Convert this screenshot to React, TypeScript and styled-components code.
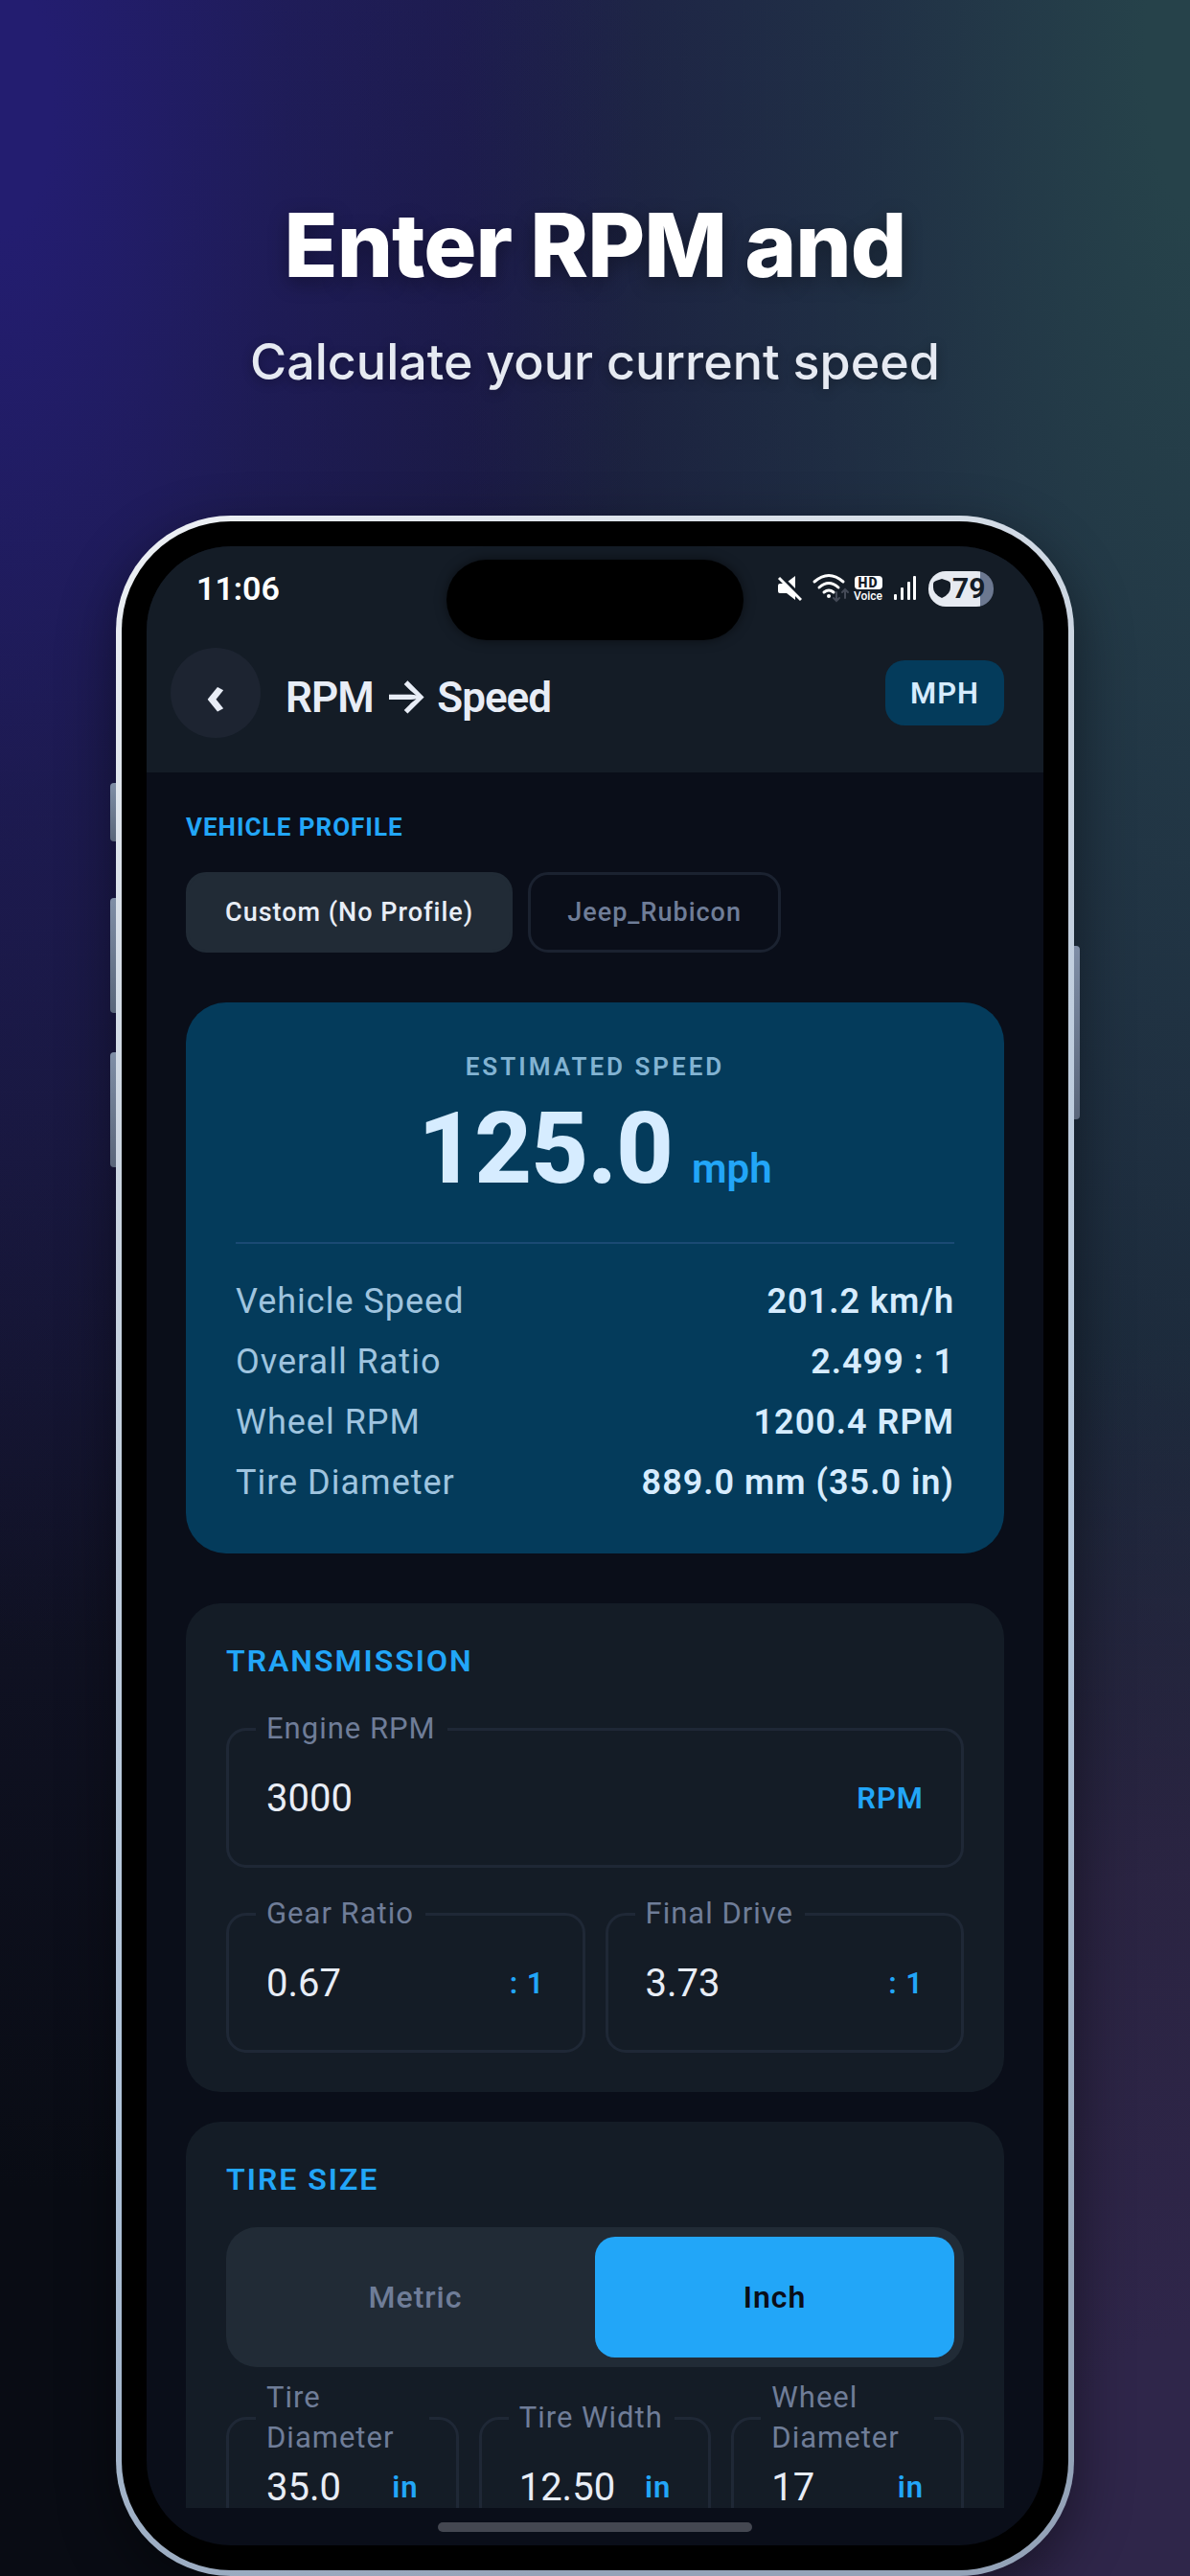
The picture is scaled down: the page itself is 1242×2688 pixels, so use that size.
import React, { useState } from 'react';
import styled, { createGlobalStyle } from 'styled-components';

const color = {
  screen: '#0a0e19',
  panel: '#141c26',
  raised: '#212b36',
  line: '#1f2836',
  hero: '#043b5b',
  heroText: '#d6ecff',
  accent: '#22a6f8',
  muted: '#6f7d98',
  text: '#e8edf6',
};

const GlobalStyle = createGlobalStyle`
  * { box-sizing: border-box; }
  html, body { margin: 0; min-height: 100%; background: #080b13; }
  body { font-family: Roboto, Inter, "Noto Sans", sans-serif; color: ${color.text}; }
  button, input { font: inherit; color: inherit; letter-spacing: inherit; border: 0; margin: 0; padding: 0; background: none; }
  h1, h2, p, dl, dd, dt { margin: 0; }
`;

const Page = styled.main`
  display: flex;
  flex-direction: column;
  align-items: center;
  min-height: 100vh;
  padding: 200px 120px 0;
  background:
    radial-gradient(ellipse 54% 60% at 0% 4%, #231d70 8%, rgba(35, 29, 112, 0.45) 45%, rgba(35, 29, 112, 0) 100%),
    radial-gradient(ellipse 70% 46% at 100% 98%, #2f264a 16%, rgba(46, 37, 70, 0.85) 55%, rgba(46, 37, 70, 0) 100%),
    radial-gradient(ellipse 62% 100% at 100% 2%, #26424a 6%, rgba(34, 56, 70, 0.75) 42%, rgba(36, 46, 62, 0) 100%),
    linear-gradient(180deg, #1c1c46 0%, #15162f 45%, #090c14 85%);
  overflow: hidden;
`;

const Intro = styled.header`
  display: flex;
  flex-direction: column;
  align-items: center;
  gap: 28px;
  height: 338px;
  font-family: Inter, sans-serif;
  text-align: center;
`;

const Headline = styled.h1`
  font-size: 92px;
  line-height: 112px;
  font-weight: 800;
  letter-spacing: -1px;
  color: #fff;
  text-shadow: 0 6px 20px rgba(0, 0, 0, 0.35);
`;

const Tagline = styled.p`
  font-size: 52px;
  line-height: 76px;
  font-weight: 500;
  color: #e6eaf2;
  text-shadow: 0 3px 12px rgba(0, 0, 0, 0.3);
`;

const Phone = styled.section`
  position: relative;
  width: 100%;
  max-width: 1000px;
  padding: 6px;
  border-radius: 120px;
  background: linear-gradient(150deg, #eef1f5 0%, #cbd5e1 25%, #b0c4da 62%, #94a3b8 88%);
  box-shadow: 0 20px 60px rgba(0, 0, 0, 0.45);
`;

const SideKey = styled.span<{ $side: 'left' | 'right'; $top: number; $length: number }>`
  position: absolute;
  top: ${(p) => p.$top}px;
  ${(p) => p.$side}: -6px;
  width: 6px;
  height: ${(p) => p.$length}px;
  border-radius: ${(p) => (p.$side === 'left' ? '4px 0 0 4px' : '0 4px 4px 0')};
  background: linear-gradient(180deg, #7f8ea6, #596579);
`;

const Bezel = styled.div`
  padding: 26px;
  border-radius: 114px;
  background: #000;
`;

const Screen = styled.div`
  position: relative;
  display: flex;
  flex-direction: column;
  border-radius: 88px;
  overflow: hidden;
  background: ${color.screen};
`;

const Island = styled.div`
  position: absolute;
  top: 14px;
  left: 50%;
  width: 310px;
  height: 84px;
  margin-left: -155px;
  border-radius: 42px;
  background: #000;
  box-shadow: 0 0 12px rgba(0, 0, 0, 0.5);
`;

const TopBar = styled.div`
  height: 236px;
  background: ${color.panel};
`;

const StatusBar = styled.div`
  display: flex;
  justify-content: space-between;
  align-items: center;
  height: 88px;
  padding: 0 52px;
`;

const Clock = styled.time`
  font-size: 34px;
  line-height: 40px;
  font-weight: 600;
  color: #fff;
`;

const StatusIcons = styled.div`
  display: flex;
  align-items: center;
  gap: 12px;
`;

const HdMark = styled.div`
  display: flex;
  flex-direction: column;
  align-items: center;
  gap: 2px;
  width: 30px;
  font-size: 12px;
  line-height: 11px;
  font-weight: 500;
  color: #fff;
  b {
    width: 29px;
    height: 14px;
    border-radius: 4px;
    background: #fff;
    color: ${color.panel};
    font-size: 14px;
    line-height: 14px;
    font-weight: 900;
    letter-spacing: 1px;
    text-align: center;
  }
`;

const Battery = styled.div`
  display: flex;
  align-items: center;
  width: 68px;
  height: 37px;
  padding-left: 5px;
  border-radius: 18px;
  background: linear-gradient(90deg, #e6eaf1 79%, #6c7890 79%);
  color: ${color.panel};
  font-size: 30px;
  line-height: 36px;
  font-weight: 700;
  svg { margin-right: 2px; }
`;

const NavBar = styled.div`
  display: flex;
  align-items: center;
  height: 130px;
  padding: 0 41px 0 25px;
`;

const BackButton = styled.button`
  width: 94px;
  height: 94px;
  border-radius: 50%;
  background: #1d2431;
  font-family: "Noto Sans", sans-serif;
  font-size: 56px;
  line-height: 92px;
  font-weight: 700;
`;

const Title = styled.h2`
  flex: 1;
  padding: 8px 0 0 26px;
  font-size: 44px;
  line-height: 52px;
  font-weight: 600;
  letter-spacing: -1px;
  white-space: nowrap;
  span {
    font-family: Inter, sans-serif;
    font-size: 50px;
    line-height: 50px;
  }
`;

const UnitButton = styled.button`
  height: 68px;
  padding: 0 26px;
  border-radius: 20px;
  background: ${color.hero};
  color: ${color.heroText};
  font-size: 31px;
  font-weight: 600;
  letter-spacing: 1px;
`;

const Scroller = styled.div`
  display: flex;
  flex-direction: column;
  height: 1811px;
  padding: 41px 41px 0;
  overflow: hidden;
`;

const SectionLabel = styled.h2`
  font-size: 26px;
  line-height: 32px;
  font-weight: 700;
  letter-spacing: 1px;
  color: ${color.accent};
`;

const Chips = styled.div`
  display: flex;
  gap: 16px;
  padding: 31px 0 52px;
`;

const Chip = styled.button<{ $active?: boolean }>`
  height: 84px;
  padding: 0 38px;
  border: 3px solid ${(p) => (p.$active ? color.raised : '#1b2230')};
  border-radius: 21px;
  background: ${(p) => (p.$active ? color.raised : 'transparent')};
  color: ${(p) => (p.$active ? color.text : color.muted)};
  font-size: 27px;
  font-weight: 500;
  letter-spacing: 1px;
`;

const Hero = styled.section`
  display: flex;
  flex: none;
  flex-direction: column;
  margin-bottom: 52px;
  padding: 51px 52px 42px;
  border-radius: 42px;
  background: ${color.hero};
`;

const HeroLabel = styled.h2`
  font-size: 26px;
  line-height: 32px;
  font-weight: 600;
  letter-spacing: 3px;
  text-align: center;
  color: #82b3d2;
`;

const Reading = styled.p`
  display: flex;
  justify-content: center;
  align-items: baseline;
  gap: 20px;
  height: 169px;
  border-bottom: 2px solid #1a4a74;
  color: ${color.heroText};
  font-size: 104px;
  line-height: 140px;
  font-weight: 800;
  letter-spacing: -1px;
  span {
    font-size: 42px;
    line-height: 50px;
    font-weight: 600;
    letter-spacing: 0;
    color: ${color.accent};
  }
`;

const Stats = styled.dl`
  display: grid;
  grid-auto-rows: 63px;
  padding-top: 29px;
`;

const Stat = styled.div`
  display: flex;
  justify-content: space-between;
  align-items: center;
  font-size: 36px;
  line-height: 63px;
  letter-spacing: 1px;
  dt { color: #9fc4df; }
  dd { color: ${color.heroText}; font-weight: 600; }
`;

const Card = styled.section`
  flex: none;
  margin-bottom: 31px;
  padding: 41px 42px;
  border-radius: 36px;
  background: ${color.panel};
`;

const CardTitle = styled.h2`
  margin-bottom: 51px;
  font-size: 32px;
  line-height: 38px;
  font-weight: 600;
  letter-spacing: 2px;
  color: ${color.accent};
`;

const FieldRow = styled.div`
  display: grid;
  grid-auto-flow: column;
  grid-auto-columns: minmax(0, 1fr);
  gap: 21px;
  & + & { margin-top: 47px; }
`;

const FieldBox = styled.div`
  position: relative;
  display: flex;
  align-items: center;
  height: 146px;
  padding: 0 39px;
  border: 3px solid ${color.line};
  border-radius: 21px;
`;

const FieldLabel = styled.label`
  position: absolute;
  top: -2px;
  left: 28px;
  max-width: calc(100% - 56px);
  padding: 0 12px 0 11px;
  transform: translateY(-50%);
  background: ${color.panel};
  color: ${color.muted};
  font-size: 31px;
  line-height: 42px;
  letter-spacing: 1px;
`;

const FieldInput = styled.input`
  flex: 1;
  min-width: 0;
  width: 0;
  height: 60px;
  outline: 0;
  color: ${color.text};
  font-size: 40px;
`;

const Suffix = styled.span`
  color: ${color.accent};
  font-size: 31px;
  font-weight: 600;
  letter-spacing: 1px;
`;

const Toggle = styled.div`
  display: grid;
  grid-template-columns: 1fr 1fr;
  height: 146px;
  margin: -20px 0 52px;
  padding: 10px;
  border-radius: 32px;
  background: ${color.raised};
`;

const ToggleOption = styled.button<{ $active: boolean }>`
  border-radius: 21px;
  background: ${(p) => (p.$active ? color.accent : 'transparent')};
  color: ${(p) => (p.$active ? color.screen : color.muted)};
  font-size: 32px;
  font-weight: ${(p) => (p.$active ? 600 : 500)};
  letter-spacing: 1px;
`;

const HomeArea = styled.div`
  display: flex;
  justify-content: center;
  height: 39px;
  padding-top: 15px;
`;

const HomeBar = styled.div`
  width: 328px;
  height: 10px;
  border-radius: 5px;
  background: #444751;
`;

const MuteIcon = () => (
  <svg width="26" height="28" viewBox="0 0 26 28" aria-hidden="true">
    <path d="M11 7 L19 1 V15Z" fill="#fff" />
    <path d="M2 2 L26 26" stroke={color.panel} strokeWidth="7" />
    <path d="M3 9 H8 L19 20 V26 L10 19 H3 Q1 19 1 17 V11 Q1 9 3 9Z" fill="#fff" />
    <path d="M2 3 L25 26" stroke="#fff" strokeWidth="3" />
  </svg>
);

const WifiIcon = () => (
  <svg width="30" height="32" viewBox="0 0 30 32" fill="none" strokeLinecap="round" overflow="visible" aria-hidden="true">
    <path d="M1 9 Q16 -4 31 9" stroke="#fff" strokeWidth="3" />
    <path d="M6 15 Q16 6 26 15" stroke="#fff" strokeWidth="3" />
    <path d="M11 20 Q16 16 21 20" stroke="#fff" strokeWidth="3" />
    <circle cx="16" cy="24" r="2" fill="#fff" />
    <path d="M24 20 V29 M21 26 L24 29 L27 26 M33 26 V17 M30 20 L33 17 L36 20" stroke="#444a57" strokeWidth="2" />
  </svg>
);

const SignalIcon = () => (
  <svg width="24" height="28" viewBox="0 0 24 28" fill="#fff" aria-hidden="true">
    <rect x="0" y="20" width="3" height="6" rx="1" />
    <rect x="7" y="13" width="3" height="13" rx="1" />
    <rect x="14" y="7" width="3" height="19" rx="1" />
    <rect x="20" y="1" width="3" height="25" rx="1" />
  </svg>
);

const ShieldIcon = () => (
  <svg width="18" height="20" viewBox="0 0 18 20" fill={color.panel} aria-hidden="true">
    <path d="M9 0 L15 2 Q18 3 18 5 V9 Q18 16 9 20 Q0 16 0 9 V5 Q0 3 3 2Z" />
  </svg>
);

interface FieldProps { id: string; label: string; initial: string; unit: string }

const Field = ({ id, label, initial, unit }: FieldProps) => {
  const [value, setValue] = useState(initial);
  return (
    <FieldBox>
      <FieldLabel htmlFor={id}>{label}</FieldLabel>
      <FieldInput id={id} inputMode="decimal" value={value} onChange={(e) => setValue(e.target.value)} />
      <Suffix>{unit}</Suffix>
    </FieldBox>
  );
};

const stats = [
  ['Vehicle Speed', '201.2 km/h'],
  ['Overall Ratio', '2.499 : 1'],
  ['Wheel RPM', '1200.4 RPM'],
  ['Tire Diameter', '889.0 mm (35.0 in)'],
];

export default function App() {
  const [profile, setProfile] = useState('Custom (No Profile)');
  const [system, setSystem] = useState('Inch');

  return (
    <>
      <GlobalStyle />
      <Page>
        <Intro>
          <Headline>Enter RPM and</Headline>
          <Tagline>Calculate your current speed</Tagline>
        </Intro>
        <Phone>
          <SideKey $side="left" $top={279} $length={61} />
          <SideKey $side="left" $top={399} $length={120} />
          <SideKey $side="left" $top={560} $length={120} />
          <SideKey $side="right" $top={449} $length={181} />
          <Bezel>
            <Screen>
              <TopBar>
                <StatusBar>
                  <Clock>11:06</Clock>
                  <StatusIcons>
                    <MuteIcon />
                    <WifiIcon />
                    <HdMark><b>HD</b>Voice</HdMark>
                    <SignalIcon />
                    <Battery><ShieldIcon />79</Battery>
                  </StatusIcons>
                </StatusBar>
                <NavBar>
                  <BackButton aria-label="Back">‹</BackButton>
                  <Title>RPM <span>→</span> Speed</Title>
                  <UnitButton>MPH</UnitButton>
                </NavBar>
              </TopBar>
              <Island />
              <Scroller>
                <SectionLabel>VEHICLE PROFILE</SectionLabel>
                <Chips>
                  {['Custom (No Profile)', 'Jeep_Rubicon'].map((name) => (
                    <Chip key={name} $active={profile === name} onClick={() => setProfile(name)}>{name}</Chip>
                  ))}
                </Chips>
                <Hero>
                  <HeroLabel>ESTIMATED SPEED</HeroLabel>
                  <Reading>125.0<span>mph</span></Reading>
                  <Stats>
                    {stats.map(([name, value]) => (
                      <Stat key={name}><dt>{name}</dt><dd>{value}</dd></Stat>
                    ))}
                  </Stats>
                </Hero>
                <Card>
                  <CardTitle>TRANSMISSION</CardTitle>
                  <FieldRow>
                    <Field id="engine-rpm" label="Engine RPM" initial="3000" unit="RPM" />
                  </FieldRow>
                  <FieldRow>
                    <Field id="gear-ratio" label="Gear Ratio" initial="0.67" unit=": 1" />
                    <Field id="final-drive" label="Final Drive" initial="3.73" unit=": 1" />
                  </FieldRow>
                </Card>
                <Card>
                  <CardTitle>TIRE SIZE</CardTitle>
                  <Toggle>
                    {['Metric', 'Inch'].map((name) => (
                      <ToggleOption key={name} $active={system === name} onClick={() => setSystem(name)}>{name}</ToggleOption>
                    ))}
                  </Toggle>
                  <FieldRow>
                    <Field id="tire-diameter" label="Tire Diameter" initial="35.0" unit="in" />
                    <Field id="tire-width" label="Tire Width" initial="12.50" unit="in" />
                    <Field id="wheel-diameter" label="Wheel Diameter" initial="17" unit="in" />
                  </FieldRow>
                </Card>
              </Scroller>
              <HomeArea><HomeBar /></HomeArea>
            </Screen>
          </Bezel>
        </Phone>
      </Page>
    </>
  );
}
